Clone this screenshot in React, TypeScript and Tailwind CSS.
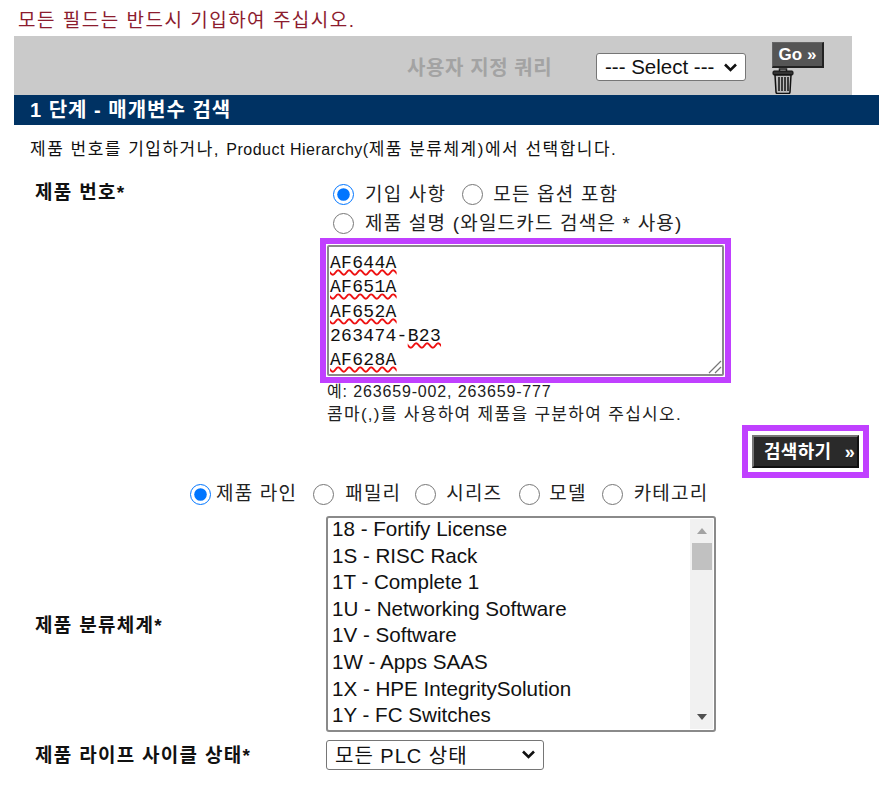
const sans = 'font-["Liberation_Sans","Noto_Sans_CJK_KR",sans-serif]';

const listItems = [
  '18 - Fortify License',
  '1S - RISC Rack',
  '1T - Complete 1',
  '1U - Networking Software',
  '1V - Software',
  '1W - Apps SAAS',
  '1X - HPE IntegritySolution',
  '1Y - FC Switches',
];

const partLines = [
  { wavy: 'AF644A' },
  { wavy: 'AF651A' },
  { wavy: 'AF652A' },
  { plain: '263474-', wavy: 'B23' },
  { wavy: 'AF628A' },
];

function Radio({ label, name, checked, gap }: { label: string; name: string; checked?: boolean; gap: string }) {
  return (
    <label className={`flex items-center ${gap}`}>
      <input type="radio" name={name} defaultChecked={checked} className="w-[21px] h-[21px] m-0 accent-[#0075ff]" />
      <span>{label}</span>
    </label>
  );
}

function Chevron() {
  return (
    <svg width="15" height="9" viewBox="0 0 15 9" className="absolute right-[8px] top-[10px] pointer-events-none">
      <path d="M2 1.5l5.5 5.5L13 1.5" fill="none" stroke="#111" strokeWidth="2.6" />
    </svg>
  );
}

function TrashIcon() {
  return (
    <svg width="22" height="26" viewBox="0 0 22 26" className="block">
      <path d="M7.5 3V1h7v2" fill="none" stroke="#222" strokeWidth="1.5" />
      <rect x="1" y="3" width="20" height="4" rx="1" fill="#333" stroke="#111" />
      <path d="M3 7h16l-1 17a1.5 1.5 0 0 1-1.5 1.5h-11A1.5 1.5 0 0 1 4 24z" fill="#bbb" stroke="#111" strokeWidth="1.5" />
      <path d="M7 9v14M10 9v14M13 9v14M16 9v14" stroke="#111" strokeWidth="1.5" />
    </svg>
  );
}

export default function App() {
  return (
    <div className={`w-[890px] h-[791px] overflow-hidden bg-white text-black ${sans}`}>
      <p className="pl-[18px] pt-[10px] h-[36px] text-[#8c1c2e] text-[19px] tracking-[1.5px] leading-[22px] whitespace-nowrap">
        모든 필드는 반드시 기입하여 주십시오.
      </p>

      <div className="ml-[14px] w-[838px] h-[59px] bg-[#cacaca] flex items-start">
        <span className="ml-[393px] mt-[20px] w-[189px] text-[20px] leading-[24px] font-bold text-[#a3a3a3] tracking-[0.6px] whitespace-nowrap">
          사용자 지정 쿼리
        </span>
        <div className="relative mt-[17px] w-[150px] h-[28px]">
          <select className="w-full h-full appearance-none bg-white border border-[#767676] rounded-[3px] text-[20.5px] leading-[24px] pl-[8px] text-[#111]">
            <option>--- Select ---</option>
          </select>
          <Chevron />
        </div>
        <div className="ml-[26px] mt-[6px] flex flex-col">
          <button className="w-[52px] h-[26px] bg-[#555] border-t border-l border-t-[#666] border-l-[#666] border-b-2 border-r-2 border-b-[#222] border-r-[#222] text-white font-bold text-[17px] leading-[20px] text-center whitespace-nowrap">
            Go »
          </button>
          <TrashIcon />
        </div>
      </div>

      <div className="ml-[14px] w-[865px] h-[30px] bg-[#003263] pl-[16px] text-white text-[20px] tracking-[1px] font-bold leading-[30px] whitespace-nowrap">
        1 단계 - 매개변수 검색
      </div>

      <p className="pl-[30px] pt-[15px] h-[55px] text-[17px] leading-[20px] tracking-[1.5px] text-[#111] whitespace-nowrap">
        제품 번호를 기입하거나, <span className="text-[16px] tracking-[0.5px]">Product Hierarchy(</span>제품 분류체계)에서 선택합니다.
      </p>

      <div className="flex">
        <div className="w-[320px] pl-[35px] pt-[1px] text-[19px] font-bold leading-[24px] tracking-[1.3px] text-[#111]">
          제품 번호*
        </div>
        <div className="w-[549px] text-[19px] leading-[24px] tracking-[1.2px] text-[#222]">
          <div className="flex pl-[13px] gap-[16px] h-[29px] items-center">
            <Radio name="mode" label="기입 사항" gap="gap-[11px]" checked />
            <Radio name="mode" label="모든 옵션 포함" gap="gap-[10px]" />
          </div>
          <div className="flex pl-[13px] h-[29px] items-center">
            <Radio name="mode" label="제품 설명 (와일드카드 검색은 * 사용)" gap="gap-[11px]" />
          </div>
          <div className="w-[411px] h-[145px] border-[6px] border-[#c040ff] p-[1px]">
            <div className="relative h-[131px] border-2 border-[#8a8a8a] rounded-[2px] overflow-hidden pl-[1px] pt-[4px] font-['Liberation_Mono',monospace] text-[18px] leading-[24.3px] tracking-[0.3px] text-[#111]">
              {partLines.map((line, i) => (
                <div key={i}>
                  {line.plain}
                  <span className="underline decoration-wavy decoration-[#e11] decoration-[1.5px] underline-offset-1">{line.wavy}</span>
                </div>
              ))}
              <svg width="14" height="14" viewBox="0 0 14 14" className="absolute right-0 bottom-0">
                <path d="M1 13L13 1M7 13l6-6" stroke="#777" strokeWidth="1.2" />
              </svg>
            </div>
          </div>
          <div className="pl-[7px] text-[16px] leading-[23px] text-[#222] -mt-[3px] whitespace-nowrap">
            <p className="tracking-[0.85px]">예: 263659-002, 263659-777</p>
            <p className="text-[17px] tracking-[1.3px]">콤마(,)를 사용하여 제품을 구분하여 주십시오.</p>
          </div>
          <div className="flex justify-end -mt-[1px]">
            <div className="border-[6px] border-[#c040ff] p-[4px] w-[127px] h-[53px]">
              <button className="w-full h-full flex items-center justify-between pl-[10px] pr-[2px] bg-[#2a2a2a] border-t-2 border-l-2 border-t-[#777] border-l-[#777] border-b-2 border-r-2 border-b-[#111] border-r-[#111] text-white font-bold text-[18px] leading-[20px] tracking-[0.3px] whitespace-nowrap">
                <span>검색하기</span>
                <span>»</span>
              </button>
            </div>
          </div>
        </div>
      </div>

      <div className="flex pl-[190px] h-[30px] mt-[1px] items-center text-[19px] tracking-[1.2px] text-[#222] whitespace-nowrap">
        <Radio name="level" label="제품 라인" gap="gap-[5px]" checked />
        <div className="ml-[16px]"><Radio name="level" label="패밀리" gap="gap-[11px]" /></div>
        <div className="ml-[14px]"><Radio name="level" label="시리즈" gap="gap-[10px]" /></div>
        <div className="ml-[17px]"><Radio name="level" label="모델" gap="gap-[9px]" /></div>
        <div className="ml-[15px]"><Radio name="level" label="카테고리" gap="gap-[11px]" /></div>
      </div>

      <div className="flex mt-[7px]">
        <div className="w-[326px] pl-[35px] pt-[3px] self-center text-[19px] font-bold leading-[24px] tracking-[1.3px] text-[#111]">
          제품 분류체계*
        </div>
        <div className="w-[390px] h-[216px] flex border-2 border-[#8a8a8a] rounded-[3px] bg-white" role="listbox">
          <div className="flex-1 pl-[4px] text-[20.6px] leading-[26.6px] text-[#111] -mt-[2px] whitespace-nowrap">
            {listItems.map((item) => (
              <div key={item}>{item}</div>
            ))}
          </div>
          <div className="w-[23px] bg-[#f1f1f1] flex flex-col items-center mr-[1px] my-[1px]">
            <svg width="14" height="14" viewBox="0 0 14 14" className="mt-[5px]"><path d="M2 10h10L7 4z" fill="#a3a3a3" /></svg>
            <div className="w-[20px] h-[27px] bg-[#c1c1c1] mt-[5px]" />
            <svg width="14" height="14" viewBox="0 0 14 14" className="mt-auto mb-[5px]"><path d="M2 4h10L7 10z" fill="#505050" /></svg>
          </div>
        </div>
      </div>

      <div className="flex mt-[8px]">
        <div className="w-[326px] pl-[35px] pt-[4px] text-[19px] font-bold leading-[24px] tracking-[1.3px] text-[#111] whitespace-nowrap">
          제품 라이프 사이클 상태*
        </div>
        <div className="relative w-[218px] h-[30px]">
          <select className="w-full h-full appearance-none bg-white border border-[#767676] rounded-[3px] text-[20px] pl-[8px] tracking-[1px] text-[#111]">
            <option>모든 PLC 상태</option>
          </select>
          <Chevron />
        </div>
      </div>
    </div>
  );
}
